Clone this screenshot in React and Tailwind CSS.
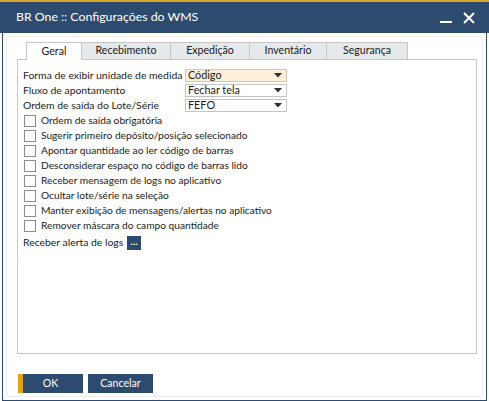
import React from "react";

const selects = [
  { label: "Forma de exibir unidade de medida", value: "Código", focused: true },
  { label: "Fluxo de apontamento", value: "Fechar tela" },
  { label: "Ordem de saída do Lote/Série", value: "FEFO" },
];

const options = [
  "Ordem de saída obrigatória",
  "Sugerir primeiro depósito/posição selecionado",
  "Apontar quantidade ao ler código de barras",
  "Desconsiderar espaço no código de barras lido",
  "Receber mensagem de logs no aplicativo",
  "Ocultar lote/série na seleção",
  "Manter exibição de mensagens/alertas no aplicativo",
  "Remover máscara do campo quantidade",
];

const tabs = [
  { name: "Geral", w: "w-[56px]", active: true },
  { name: "Recebimento", w: "w-[90px]" },
  { name: "Expedição", w: "w-[80px]" },
  { name: "Inventário", w: "w-[78px]" },
  { name: "Segurança", w: "w-[82px]" },
];

function Caret() {
  return (
    <svg width="8" height="5" viewBox="0 0 8 5" className="shrink-0">
      <path d="M0 0 H8 L4 4.5 Z" fill="#2f2f2f" />
    </svg>
  );
}

function SelectBox({ value, focused }) {
  return (
    <div
      className={
        "w-[102px] h-[13px] flex items-center justify-between pl-[2px] pr-[4px] border text-[10.8px] " +
        (focused ? "bg-[#fcefd9] border-[#d6c9b0]" : "bg-white border-[#c4c4c4]")
      }
    >
      <span className="leading-none">{value}</span>
      <Caret />
    </div>
  );
}

export default function App() {
  return (
    <div className="w-[489px] h-[401px] bg-white text-[#1a1a1a] font-['Lato',sans-serif] flex flex-col">
      <div className="h-[2px] bg-[#d9a326]" />
      <div className="h-[31px] bg-[#2c4b6e] flex items-center pl-[16px] pr-[14px] text-white">
        <span className="text-[12.3px]">BR One :: Configurações do WMS</span>
        <div className="ml-auto flex items-center gap-[11px]">
          <svg width="12" height="12" viewBox="0 0 12 12">
            <rect x="0" y="9" width="12" height="2" fill="#ffffff" />
          </svg>
          <svg width="12" height="12" viewBox="0 0 12 12">
            <path d="M1 1 L11 11 M11 1 L1 11" stroke="#ffffff" strokeWidth="2" />
          </svg>
        </div>
      </div>
      <div className="flex-1 mx-[2px] border-x border-b border-[#2c4b6e] bg-white p-[3px]">
        <div className="h-full border border-[#ececec] flex flex-col pl-[10px] pt-[4px]">
          <div className="flex pl-[9px] h-[18px] items-end">
            {tabs.map((t) => (
              <div
                key={t.name}
                className={
                  t.w +
                  " h-[17px] flex items-center justify-center text-[10.6px] border-t border-l border-r border-[#c6c6c6] -ml-px first:ml-0 " +
                  (t.active ? "bg-white h-[18px] relative -mb-px z-10" : "bg-[#e6e9ec]")
                }
              >
                {t.name}
              </div>
            ))}
          </div>
          <div className="w-[460px] h-[295px] border border-[#c6c6c6] bg-white pl-[5px] pt-[8px] text-[10.2px]">
            <div className="flex flex-col">
              {selects.map((s) => (
                <div key={s.label} className="h-[15px] flex items-center">
                  <span className="w-[162px] leading-none whitespace-nowrap text-[10.4px]">{s.label}</span>
                  <SelectBox value={s.value} focused={s.focused} />
                </div>
              ))}
              {options.map((o) => (
                <div key={o} className="h-[15px] flex items-center pl-[1px]">
                  <div className="w-[12px] h-[12px] border border-[#8c8c8c] bg-white mr-[5px]" />
                  <span className="leading-none">{o}</span>
                </div>
              ))}
              <div className="h-[17px] flex items-center mt-[1px]">
                <span className="leading-none mr-[4px] text-[10.4px]">Receber alerta de logs</span>
                <div className="w-[14px] h-[14px] bg-[#2c4b6e] text-white text-[10px] font-bold leading-none flex items-center justify-center pb-[3px]">
                  ...
                </div>
              </div>
            </div>
          </div>
          <div className="flex gap-[5px] mt-[20px] pl-[1px]">
            <div className="w-[65px] h-[19px] bg-[#2c4b6e] flex text-white text-[10.6px]">
              <div className="w-[5px] bg-[#e3a21a]" />
              <div className="flex-1 flex items-center justify-center pr-[5px]">OK</div>
            </div>
            <div className="w-[65px] h-[19px] bg-[#2c4b6e] flex items-center justify-center text-white text-[10.6px]">
              Cancelar
            </div>
          </div>
        </div>
      </div>
    </div>
  );
}
